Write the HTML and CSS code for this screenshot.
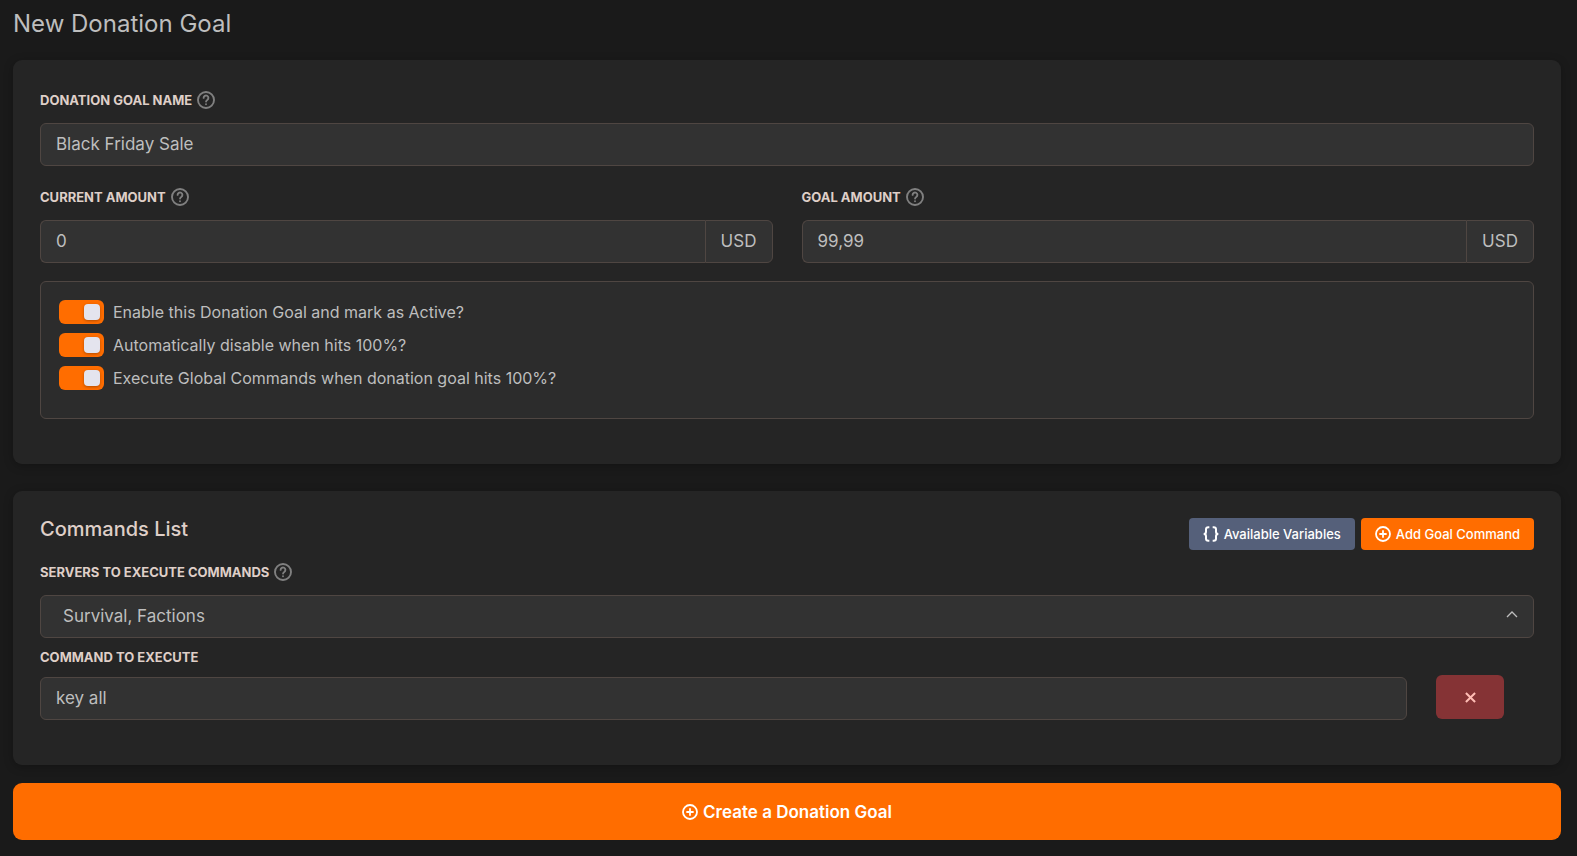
FILE: index.html
```html
<!DOCTYPE html>
<html lang="en">
<head>
    <meta charset="UTF-8">
    <meta name="viewport" content="width=device-width, initial-scale=1.0">
    <title>New Donation Goal</title>
    <link rel="stylesheet" href="styles.css">
</head>
<body>
    <!-- Shared icons -->
    <svg class="icon-defs" aria-hidden="true">
        <symbol id="icon-help" viewBox="0 0 24 24">
            <g fill="none" stroke="currentColor" stroke-width="2.500" stroke-linecap="round" stroke-linejoin="round">
                <circle cx="12" cy="12" r="10.700"/>
                <path d="M8.8 9.200a3.200 3.200 0 1 1 4.900 2.700c-1 .700-1.600 1.200-1.600 2.200"/>
                <path d="M12 17.600v.100"/>
            </g>
        </symbol>
        <symbol id="icon-plus" viewBox="0 0 24 24">
            <g fill="none" stroke="currentColor" stroke-width="2.700">
                <circle cx="12" cy="12" r="10.500"/>
                <path d="M12 6.500v11M6.500 12h11"/>
            </g>
        </symbol>
    </svg>

    <form class="page">
        <h1>New Donation Goal</h1>

        <div class="card">
            <div class="form-group">
                <label class="with-icon" for="name">Donation Goal Name <svg class="help"><use href="#icon-help"/></svg></label>
                <input type="text" class="form-control" id="name" value="Black Friday Sale">
            </div>
            <div class="row">
                <div class="form-group">
                    <label class="with-icon" for="current">Current Amount <svg class="help"><use href="#icon-help"/></svg></label>
                    <div class="input-group">
                        <input type="text" class="form-control" id="current" value="0">
                        <span class="addon">USD</span>
                    </div>
                </div>
                <div class="form-group">
                    <label class="with-icon" for="goal">Goal Amount <svg class="help"><use href="#icon-help"/></svg></label>
                    <div class="input-group">
                        <input type="text" class="form-control" id="goal" value="99,99">
                        <span class="addon">USD</span>
                    </div>
                </div>
            </div>
            <div class="switches">
                <div class="switch">
                    <input type="checkbox" id="active" checked>
                    <label for="active">Enable this Donation Goal and mark as Active?</label>
                </div>
                <div class="switch">
                    <input type="checkbox" id="autoDisable" checked>
                    <label for="autoDisable">Automatically disable when hits 100%?</label>
                </div>
                <div class="switch">
                    <input type="checkbox" id="execute" checked>
                    <label for="execute">Execute Global Commands when donation goal hits 100%?</label>
                </div>
            </div>
        </div>

        <div class="card">
            <div class="card-header">
                <h2>Commands List</h2>
                <div class="actions">
                    <button type="button" class="btn btn-secondary">
                        <svg class="icon" viewBox="0 0 24 24" fill="none" stroke="currentColor" stroke-width="3"><path d="M9.500 2H8Q4.500 2 4.500 5v3.500Q4.500 12 1 12q3.500 0 3.500 3.500V19q0 3 3.500 3h1.500M14.500 2H16q3.500 0 3.500 3v3.500q0 3.500 3.500 3.500-3.500 0-3.500 3.500V19q0 3-3.500 3h-1.500"/></svg>
                        Available Variables
                    </button>
                    <button type="button" class="btn btn-primary">
                        <svg class="icon"><use href="#icon-plus"/></svg>
                        Add Goal Command
                    </button>
                </div>
            </div>
            <div class="form-group servers">
                <label class="with-icon" for="servers">Servers to execute commands <svg class="help"><use href="#icon-help"/></svg></label>
                <div class="select-wrap">
                    <select class="form-control" id="servers">
                        <option>Survival, Factions</option>
                    </select>
                    <svg class="chevron" viewBox="0 0 12 8" fill="none" stroke="currentColor" stroke-width="1.300"><path d="M1 7l5-5 5 5"/></svg>
                </div>
            </div>
            <div class="command">
                <div class="form-group">
                    <label for="command">Command to execute</label>
                    <input type="text" class="form-control" id="command" value="key all">
                </div>
                <button type="button" class="btn-delete" aria-label="Remove command">
                    <svg viewBox="0 0 12 12" fill="none" stroke="currentColor" stroke-width="2.200"><path d="M1 1l10 10M11 1L1 11"/></svg>
                </button>
            </div>
        </div>

        <button type="submit" class="btn-submit">
            <svg class="icon"><use href="#icon-plus"/></svg>
            Create a Donation Goal
        </button>
    </form>
</body>
</html>
```

FILE: styles.css
```css
* {
    box-sizing: border-box;
}
body {
    margin: 0;
    background: #1a1a1a;
    color: #bebebe;
    font-family: Inter, "Liberation Sans", sans-serif;
    font-size: 16px;
}
input, select, button {
    font: inherit;
    color: inherit;
}
.icon-defs {
    display: none;
}
.page {
    padding: 8px 16px 16px 13px;
}
h1 {
    margin: 0 0 20px;
    font-size: 24px;
    font-weight: 400;
    line-height: 32px;
}
h2 {
    margin: 0;
    color: #dfcfc8;
    font-size: 20px;
    font-weight: 500;
    line-height: 22px;
}

/* Cards */
.card {
    margin-bottom: 27px;
    padding: 27px 27px 45px;
    background: #252525;
    border-radius: 9px;
    box-shadow: 0 2px 10px rgba(0, 0, 0, 0.25);
}
.card + .card {
    margin-bottom: 18px;
}
.card-header {
    display: flex;
    justify-content: space-between;
    align-items: flex-start;
    margin-bottom: 9px;
}

/* Form fields */
.form-group {
    margin-bottom: 18px;
}
.form-group label {
    display: flex;
    align-items: center;
    gap: 5px;
    margin-bottom: 10px;
    color: #dfcfc8;
    font-size: 13px;
    font-weight: 700;
    line-height: 20px;
    text-transform: uppercase;
}
.form-group .with-icon {
    line-height: 26px;
}
.help {
    width: 18px;
    height: 18px;
    color: #808080;
}
.form-control {
    display: block;
    width: 100%;
    height: 43px;
    padding: 0 15px 2px;
    background: #323232;
    border: 1px solid #4f4642;
    border-radius: 6px;
    outline: none;
    font-size: 17px;
}
.row {
    display: grid;
    grid-template-columns: 1fr 1fr;
    gap: 29px;
}
.input-group {
    display: flex;
}
.input-group .form-control {
    flex: 1;
    min-width: 0;
    border-right: 0;
    border-radius: 6px 0 0 6px;
}
.addon {
    display: flex;
    align-items: center;
    justify-content: center;
    width: 68px;
    padding-bottom: 2px;
    background: #323232;
    border: 1px solid #4f4642;
    border-radius: 0 6px 6px 0;
    font-size: 17px;
}
.servers {
    margin-bottom: 9px;
}
.select-wrap {
    position: relative;
}
select.form-control {
    appearance: none;
    padding: 0 40px 2px 22px;
}
.chevron {
    position: absolute;
    top: 15px;
    right: 16px;
    width: 12px;
    height: 8px;
    pointer-events: none;
}

/* Switches */
.switches {
    display: flex;
    flex-direction: column;
    gap: 9px;
    padding: 18px 18px 28px;
    background: #2c2c2c;
    border: 1px solid #4f4642;
    border-radius: 6px;
}
.switch {
    display: flex;
    align-items: center;
    gap: 9px;
    line-height: 24px;
}
.switch input {
    appearance: none;
    display: flex;
    justify-content: flex-end;
    width: 45px;
    height: 24px;
    margin: 0;
    padding: 4px;
    background: #ff6d00;
    border-radius: 6px;
}
.switch input::before {
    content: "";
    width: 16px;
    height: 16px;
    background: #e4e4ee;
    border-radius: 4px;
    box-shadow: 0 1px 3px rgba(0, 0, 0, 0.3);
}
.switch input:not(:checked) {
    justify-content: flex-start;
    background: #4f4642;
}

/* Buttons */
button {
    border: none;
    cursor: pointer;
}
.actions {
    display: flex;
    gap: 6px;
}
.icon {
    width: 16px;
    height: 16px;
}
.btn {
    display: flex;
    align-items: center;
    gap: 5px;
    height: 32px;
    padding: 0 14px;
    border-radius: 4px;
    color: #fff;
    font-size: 13px;
    font-weight: 500;
}
.btn-primary {
    background: #ff6d00;
}
.btn-secondary {
    background: #55607a;
}
.command {
    display: flex;
    align-items: flex-end;
    gap: 29px;
    padding-right: 30px;
}
.command .form-group {
    flex: 1;
    margin-bottom: 0;
}
.btn-delete {
    display: flex;
    align-items: center;
    justify-content: center;
    width: 68px;
    height: 44px;
    margin-bottom: 1px;
    background: #853335;
    border-radius: 6px;
    color: #ffbdb5;
}
.btn-delete svg {
    width: 11px;
    height: 11px;
}
.btn-submit {
    display: flex;
    align-items: center;
    justify-content: center;
    gap: 5px;
    width: 100%;
    height: 57px;
    background: #ff6d00;
    border-radius: 9px;
    color: #fff;
    font-size: 17px;
    font-weight: 600;
}
```
